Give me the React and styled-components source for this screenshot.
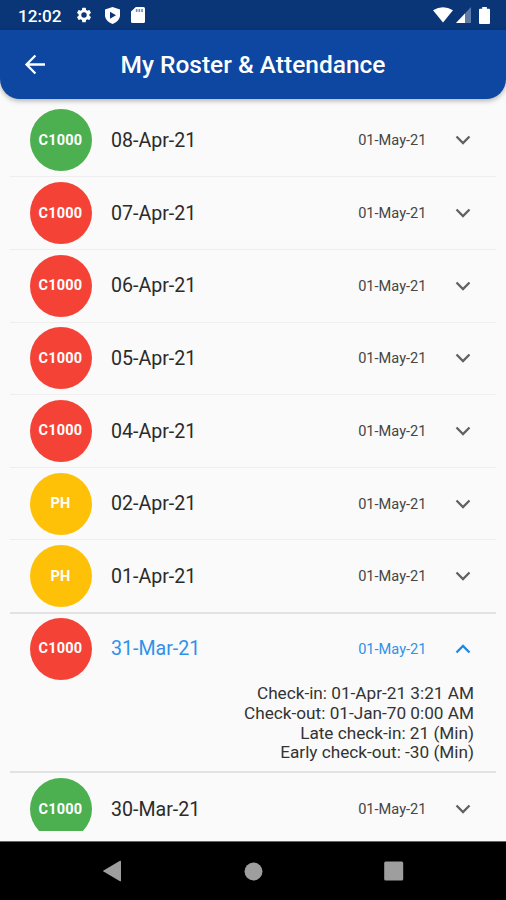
import React from "react";
import styled, { createGlobalStyle } from "styled-components";

const GlobalStyle = createGlobalStyle`
  * { box-sizing: border-box; }
  body { margin: 0; background: #fafafa; font-family: Roboto, sans-serif; }
  svg { display: block; flex: none; }
`;

const Screen = styled.div`
  width: 506px;
  height: 900px;
  display: flex;
  flex-direction: column;
  overflow: hidden;
  background: #fafafa;
`;

const StatusBar = styled.div`
  flex: none;
  height: 30px;
  padding: 0 16.5px 0 18px;
  display: flex;
  align-items: center;
  background: #0a3576;
  color: #fff;
`;

const Clock = styled.span`
  width: 57px;
  padding-top: 2px;
  font-size: 17.2px;
  line-height: 20px;
  font-weight: 500;
  white-space: nowrap;
`;

const StatusIcons = styled.div`
  display: flex;
  align-items: center;
  gap: ${(p) => p.$gap}px;
  margin-left: ${(p) => (p.$end ? "auto" : 0)};
`;

const BatterySlot = styled.span`
  padding-left: 5px;
`;

const AppBar = styled.header`
  flex: none;
  height: 69px;
  padding: 0 20px;
  display: grid;
  grid-template-columns: 30px 1fr 30px;
  align-items: center;
  background: #0d47a1;
  border-radius: 0 0 20px 20px;
  box-shadow: 0 2px 5px rgba(0, 0, 0, 0.28);
  color: #fff;
`;

const Title = styled.h1`
  margin: 0;
  padding-top: 1px;
  font-size: 24.5px;
  line-height: 28px;
  font-weight: 500;
  text-align: center;
  white-space: nowrap;
`;

const List = styled.main`
  flex: none;
  height: 727px;
  margin: 5px 10px 0;
  padding-top: 0.6px;
  overflow: hidden;
`;

const Entry = styled.section`
  height: ${(p) => (p.$open ? 159.5 : p.$heavy ? 73.4 : 72.65)}px;
  border-bottom: ${(p) => (p.$heavy ? "2px solid #e2e2e2" : "1px solid #eeeeee")};
`;

const EntryRow = styled.div`
  height: ${(p) => (p.$open ? 69.6 : 71.65)}px;
  margin-bottom: ${(p) => (p.$open ? 0.8 : 0)}px;
  padding: 0 25.5px 0 20px;
  display: flex;
  align-items: center;
  color: ${(p) => (p.$open ? "#2f92e8" : "#2b2b2b")};
`;

const Badge = styled.div`
  width: 62px;
  height: 62px;
  flex: none;
  padding-right: 1px;
  border-radius: 50%;
  display: flex;
  align-items: center;
  justify-content: center;
  background: ${(p) => p.$color};
  color: #fff;
  font-size: 14.5px;
  font-weight: 700;
  letter-spacing: 0.2px;
`;

const DateText = styled.span`
  flex: 1;
  margin-left: 19px;
  padding-top: 1.4px;
  font-size: 19.6px;
  line-height: 24px;
`;

const RosterDate = styled.span`
  width: 69px;
  margin-right: 28px;
  font-size: 14.6px;
  line-height: 18px;
  text-align: right;
  white-space: nowrap;
  color: ${(p) => (p.$open ? "inherit" : "#454545")};
`;

const Details = styled.div`
  padding: 0 22px 0 0;
  font-size: 17.2px;
  line-height: 19.7px;
  text-align: right;
  color: #333;
`;

const NavBar = styled.nav`
  flex: none;
  height: 59px;
  margin-top: auto;
  border-top: 1px solid #666;
  padding: 0 102.4px 0 102.4px;
  display: flex;
  align-items: center;
  justify-content: space-between;
  background: #000;
`;

const Chevron = ({ up }) => (
  <svg width="16" height="10" viewBox="0 0 16 10" fill="none" stroke={up ? "#1e88e5" : "#616161"} strokeWidth="2.3">
    <path d={up ? "M1.5 8.5 8 2l6.5 6.5" : "M1.5 1.5 8 8l6.5-6.5"} />
  </svg>
);

const Gear = () => (
  <svg width="18" height="18" viewBox="0 0 24 24" fill="#fff">
    <path d="M19.14 12.94c.04-.3.06-.61.06-.94s-.02-.64-.07-.94l2.03-1.58a.49.49 0 0 0 .12-.61l-1.92-3.32a.49.49 0 0 0-.59-.22l-2.39.96a7 7 0 0 0-1.62-.94l-.36-2.54a.48.48 0 0 0-.48-.41h-3.84a.48.48 0 0 0-.47.41l-.36 2.54c-.59.24-1.13.57-1.62.94l-2.39-.96a.48.48 0 0 0-.59.22L2.74 8.87a.48.48 0 0 0 .12.61l2.03 1.58a6 6 0 0 0 0 1.88l-2.03 1.58a.49.49 0 0 0-.12.61l1.92 3.32c.12.22.37.29.59.22l2.39-.96c.5.38 1.03.7 1.62.94l.36 2.54c.05.24.24.41.48.41h3.84c.24 0 .44-.17.47-.41l.36-2.54a7 7 0 0 0 1.62-.94l2.39.96c.22.08.47 0 .59-.22l1.92-3.32a.48.48 0 0 0-.12-.61zM12 15.6a3.6 3.6 0 1 1 0-7.2 3.6 3.6 0 0 1 0 7.2" />
  </svg>
);

const Shield = () => (
  <svg width="15" height="17" viewBox="0 0 15 17">
    <path fill="#fff" d="M7.5 0 15 2.5v5.8c0 4-3.1 7.1-7.5 8.7C3.1 15.4 0 12.3 0 8.3V2.5z" />
    <path fill="#0a3576" d="M5 4.8 11 8.3 5 11.8z" />
  </svg>
);

const SdCard = () => (
  <svg width="14" height="16" viewBox="0 0 13 16" preserveAspectRatio="none">
    <path fill="#fff" d="M4.5 0h7A1.5 1.5 0 0 1 13 1.5v13a1.5 1.5 0 0 1-1.5 1.5h-10A1.5 1.5 0 0 1 0 14.5v-10z" />
    <path fill="#6f8bb8" d="M4.5 2H6v3H4.5zM7 2h1.5v3H7zM9.5 2H11v3H9.5z" />
  </svg>
);

const Wifi = () => (
  <svg width="20" height="16" viewBox="0 0 20 16" fill="#fff">
    <path d="M0 3.2Q10-2.8 20 3.2L10 15.5z" />
  </svg>
);

const Signal = () => (
  <svg width="15" height="16" viewBox="0 0 15 16">
    <path fill="#5d7ba9" d="M15 0v16H0z" />
    <path fill="#fff" d="M9 6.4V16H0z" />
  </svg>
);

const Battery = () => (
  <svg width="11" height="17" viewBox="0 0 11 17" fill="#fff">
    <path d="M3.2 0h4.6v1.8H10a1 1 0 0 1 1 1V16a1 1 0 0 1-1 1H1a1 1 0 0 1-1-1V2.8a1 1 0 0 1 1-1h2.2z" />
  </svg>
);

const BackArrow = () => (
  <svg width="30" height="30" viewBox="0 0 30 30" fill="none" stroke="#fff" strokeWidth="2.3">
    <path d="M25 14.5H7M15.4 5.5 6.5 14.5l8.900 9" />
  </svg>
);

const GREEN = "#4caf50";
const RED = "#f44336";
const AMBER = "#ffc107";

const entries = [
  { code: "C1000", color: GREEN, date: "08-Apr-21" },
  { code: "C1000", color: RED, date: "07-Apr-21" },
  { code: "C1000", color: RED, date: "06-Apr-21" },
  { code: "C1000", color: RED, date: "05-Apr-21" },
  { code: "C1000", color: RED, date: "04-Apr-21" },
  { code: "PH", color: AMBER, date: "02-Apr-21" },
  { code: "PH", color: AMBER, date: "01-Apr-21" },
  {
    code: "C1000",
    color: RED,
    date: "31-Mar-21",
    details: [
      "Check-in: 01-Apr-21 3:21 AM",
      "Check-out: 01-Jan-70 0:00 AM",
      "Late check-in: 21 (Min)",
      "Early check-out: -30 (Min)",
    ],
  },
  { code: "C1000", color: GREEN, date: "30-Mar-21" },
];

export default function App() {
  return (
    <Screen>
      <GlobalStyle />
      <StatusBar>
        <Clock>12:02</Clock>
        <StatusIcons $gap={11.5}>
          <Gear />
          <Shield />
          <SdCard />
        </StatusIcons>
        <StatusIcons $gap={3} $end>
          <Wifi />
          <Signal />
          <BatterySlot>
            <Battery />
          </BatterySlot>
        </StatusIcons>
      </StatusBar>
      <AppBar>
        <BackArrow />
        <Title>My Roster &amp; Attendance</Title>
      </AppBar>
      <List>
        {entries.map((e, i) => {
          const open = Boolean(e.details);
          const heavy = open || Boolean(entries[i + 1]?.details);
          return (
            <Entry key={e.date} $open={open} $heavy={heavy}>
              <EntryRow $open={open}>
                <Badge $color={e.color}>{e.code}</Badge>
                <DateText>{e.date}</DateText>
                <RosterDate $open={open}>01-May-21</RosterDate>
                <Chevron up={open} />
              </EntryRow>
              {open && (
                <Details>
                  {e.details.map((line) => (
                    <div key={line}>{line}</div>
                  ))}
                </Details>
              )}
            </Entry>
          );
        })}
      </List>
      <NavBar>
        <svg width="20" height="22" viewBox="0 0 20 22" fill="#9e9e9e">
          <path d="M18 .8q1-.5 1 .7v19q0 1.2-1 .7L1.5 11.6q-1-.6 0-1.2z" />
        </svg>
        <svg width="19" height="19" viewBox="0 0 19 19" fill="#9e9e9e">
          <circle cx="9.5" cy="9.5" r="9" />
        </svg>
        <svg width="20" height="20" viewBox="0 0 20 20" fill="#9e9e9e">
          <rect x=".2" y=".5" width="19" height="19" rx="1.5" />
        </svg>
      </NavBar>
    </Screen>
  );
}
